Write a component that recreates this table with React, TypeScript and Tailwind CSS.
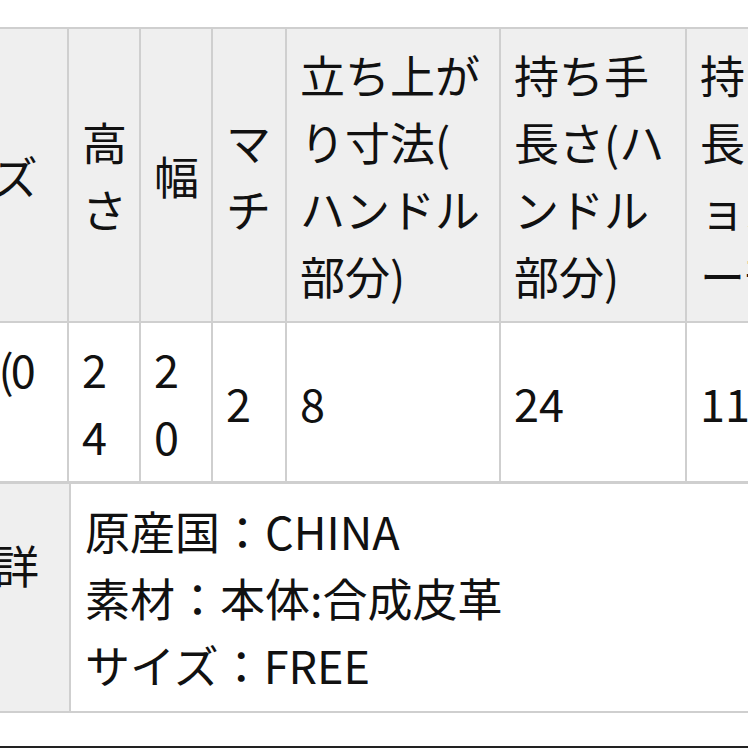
const cell = 'flex items-center px-[13px] py-[12px]';

const headers = [
  'サイズ',
  '高さ',
  '幅',
  'マチ',
  '立ち上がり寸法(ハンドル部分)',
  '持ち手長さ(ハンドル部分)',
  '持ち手長さ(ショルダー部分)',
];

const values: React.ReactNode[] = [
  <span className="whitespace-nowrap tracking-[-3px]">
    FREE(0
    <br />
    cm)
  </span>,
  '24',
  '20',
  '2',
  '8',
  '24',
  '110',
];

const cols = 'grid grid-cols-[176px_70px_70px_72px_212px_184px_186px] gap-[2px]';

export default function App() {
  return (
    <div
      className="relative h-[748px] w-[748px] overflow-hidden bg-white text-[45px] leading-[67px] text-[#111]"
      style={{ fontFamily: '"Noto Sans CJK JP", "Noto Sans", sans-serif' }}
    >
      <div className="ml-[-111px] mt-[27px] flex w-[888px] flex-col gap-[3px] bg-[#cfcfcf] p-[2px]">
        <div className={cols}>
          {headers.map((h, i) => (
            <div key={'h' + i} className={`${cell} bg-[#efefef]`}>
              <span className="break-all [line-break:anywhere]">{h}</span>
            </div>
          ))}
          {values.map((v, i) => (
            <div key={'v' + i} className={`${cell} bg-white`}>
              <span className="break-all">{v}</span>
            </div>
          ))}
        </div>

        {/* details */}
        <div className="grid grid-cols-[178px_1fr] gap-[2px]">
          <div className="flex items-center bg-[#efefef] px-[13px] py-[13px]">
            <span>商品詳細</span>
          </div>
          <div className="flex flex-col bg-white px-[14px] py-[13px]">
            <div>原産国：CHINA</div>
            <div>素材：本体:合成皮革</div>
            <div>サイズ：FREE</div>
          </div>
        </div>
      </div>

      <div className="absolute bottom-0 left-0 h-[2px] w-full bg-[#222]" />
    </div>
  );
}
